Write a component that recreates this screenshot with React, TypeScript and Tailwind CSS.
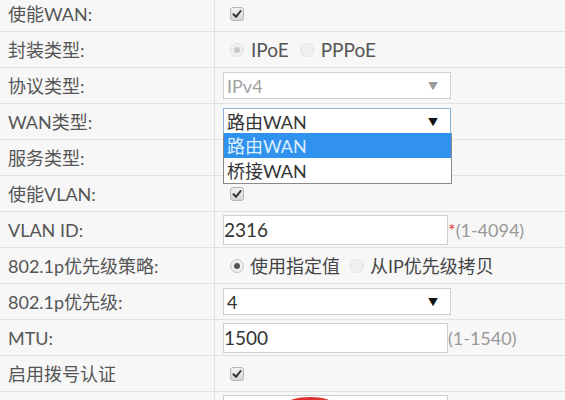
import React from 'react'

const font = { fontFamily: 'Lato, "Noto Sans CJK SC", sans-serif' }

function Check() {
  return (
    <span className="w-[14px] h-[14px] rounded-[3px] border border-[#b5b5b5] bg-gradient-to-b from-[#f2f2f2] to-[#d6d6d6] flex items-center justify-center">
      <svg width="10" height="10" viewBox="0 0 10 10">
        <path d="M1.5 5.2 L4 7.8 L8.6 2" fill="none" stroke="#333" strokeWidth="2" strokeLinecap="round" strokeLinejoin="round" />
      </svg>
    </span>
  )
}

function Radio({ on, dim }: { on?: boolean; dim?: boolean }) {
  return (
    <span
      className={`w-[14px] h-[14px] rounded-full border flex items-center justify-center ${
        dim ? 'border-[#e2e2e2] bg-[#efefef]' : 'border-[#c4c4c4] bg-[#f0f0f0]'
      }`}
    >
      {on && <span className={`w-[6px] h-[6px] rounded-full ${dim ? 'bg-[#c8c8c8]' : 'bg-[#555]'}`} />}
    </span>
  )
}

function Select({ value, disabled, focused }: { value: string; disabled?: boolean; focused?: boolean }) {
  return (
    <div
      className={`w-[228px] h-[27px] bg-white border flex items-center justify-between pl-[3px] pr-[12px] ${
        focused ? 'border-[#8fb3d9]' : 'border-[#cfcfcf]'
      }`}
    >
      <span className={disabled ? 'text-[#a0a0a0]' : 'text-[#333]'}>{value}</span>
      <span className={`text-[10px] ${disabled ? 'text-[#9a9a9a]' : 'text-[#111]'}`}>▼</span>
    </div>
  )
}

function Input({ value }: { value: string }) {
  return (
    <div className="w-[225px] h-[30px] bg-white border border-[#cfcfcf] flex items-center text-[#333] text-[19px]">
      {value}
    </div>
  )
}

function Row({ label, children }: { label: string; children?: React.ReactNode }) {
  return (
    <div className="grid grid-cols-[215px_1fr] border-b border-[#e2e2e2] h-[36px]">
      <div className="flex items-center pl-[8px] border-r border-[#e2e2e2] text-[#555]">{label}</div>
      <div className="flex items-center pl-[8px] gap-[6px] relative">{children}</div>
    </div>
  )
}

export default function App() {
  return (
    <div className="w-[565px] h-[400px] overflow-hidden bg-[#f7f7f7] text-[18px] leading-none" style={font}>
      <div className="-mt-[4px]">
        <Row label="使能WAN:">
          <span className="pl-[7px]"><Check /></span>
        </Row>
        <Row label="封装类型:">
          <span className="pl-[7px] flex items-center gap-[7px] text-[#555] text-[19px]">
            <Radio on dim /> IPoE
            <span className="ml-[4px]"><Radio dim /></span> PPPoE
          </span>
        </Row>
        <Row label="协议类型:">
          <Select value="IPv4" disabled />
        </Row>
        <Row label="WAN类型:">
          <Select value="路由WAN" focused />
          <div className="absolute left-[8px] top-[29px] w-[229px] z-10 bg-white border border-[#8a8a8a] border-t-0">
            <div className="h-[25px] flex items-center pl-[3px] bg-[#3092ee] text-[#dfefff]">路由WAN</div>
            <div className="h-[25px] flex items-center pl-[3px] text-[#333]">桥接WAN</div>
          </div>
        </Row>
        <Row label="服务类型:" />
        <Row label="使能VLAN:">
          <span className="pl-[7px]"><Check /></span>
        </Row>
        <Row label="VLAN ID:">
          <Input value="2316" />
          <span className="-ml-[6px] text-[#999]"><span className="text-[#e04040]">*</span>(1-4094)</span>
        </Row>
        <Row label="802.1p优先级策略:">
          <span className="pl-[7px] flex items-center gap-[6px] text-[#444]">
            <Radio on /> 使用指定值
            <span className="ml-[4px]"><Radio dim /></span> 从IP优先级拷贝
          </span>
        </Row>
        <Row label="802.1p优先级:">
          <Select value="4" />
        </Row>
        <Row label="MTU:">
          <Input value="1500" />
          <span className="-ml-[6px] text-[#999]">(1-1540)</span>
        </Row>
        <Row label="启用拨号认证">
          <span className="pl-[7px]"><Check /></span>
        </Row>
        <Row label="">
          <div className="self-start mt-[3px] w-[225px] h-[30px] bg-white border border-[#cfcfcf] relative overflow-hidden">
            <span className="absolute left-[62px] top-[1px] w-[48px] h-[16px] rounded-[50%] border-t-[3px] border-[#e03030]" />
          </div>
        </Row>
      </div>
    </div>
  )
}
